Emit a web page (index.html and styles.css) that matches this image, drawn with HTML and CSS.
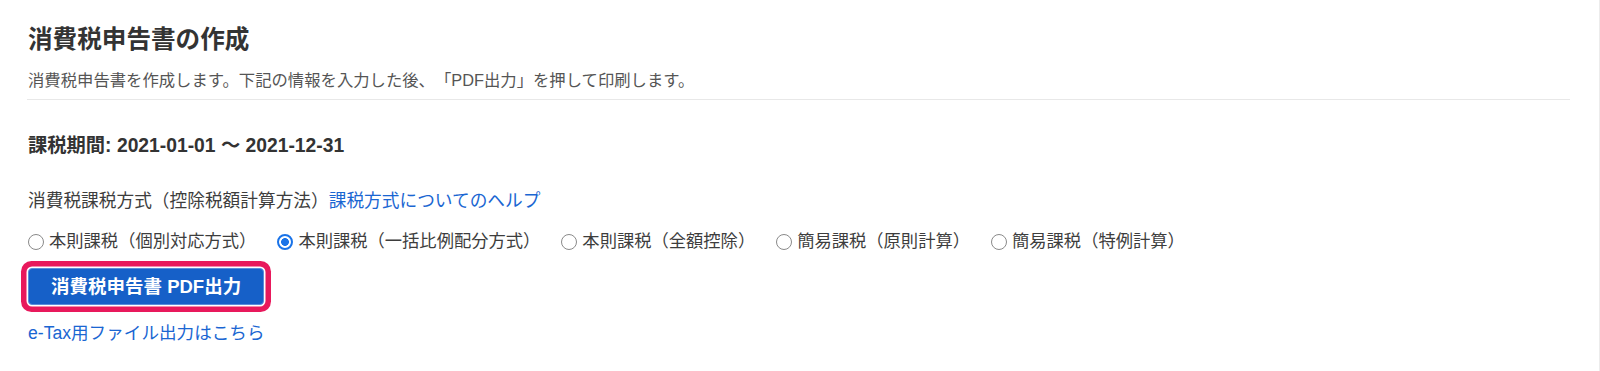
FILE: index.html
```html
<!DOCTYPE html>
<html lang="ja">
<head>
<meta charset="utf-8">
<title>消費税申告書の作成</title>
<link rel="stylesheet" href="styles.css">
</head>
<body>
<div class="page">
  <h1 class="title">消費税申告書の作成</h1>
  <p class="desc">消費税申告書を作成します。下記の情報を入力した後、「PDF出力」を押して印刷します。</p>
  <hr class="rule">
  <div class="period">課税期間: 2021-01-01 〜 2021-12-31</div>
  <div class="method-label">消費税課税方式（控除税額計算方法）<a class="link" href="#">課税方式についてのヘルプ</a></div>
  <div class="radios">
    <label class="radio"><input type="radio" name="m"><span>本則課税（個別対応方式）</span></label>
    <label class="radio"><input type="radio" name="m" checked><span>本則課税（一括比例配分方式）</span></label>
    <label class="radio"><input type="radio" name="m"><span>本則課税（全額控除）</span></label>
    <label class="radio"><input type="radio" name="m"><span>簡易課税（原則計算）</span></label>
    <label class="radio"><input type="radio" name="m"><span>簡易課税（特例計算）</span></label>
  </div>
  <div class="actions">
    <button class="btn" type="button">消費税申告書 PDF出力</button>
  </div>
  <a class="link etax" href="#">e-Tax用ファイル出力はこちら</a>
</div>
</body>
</html>
```

FILE: styles.css
```css
html, body {
  margin: 0;
  padding: 0;
  background: #fff;
}
body {
  font-family: "Liberation Sans", "Noto Sans CJK JP", sans-serif;
  color: #333;
  border-right: 1px solid #ececec;
  min-height: 371px;
  box-sizing: border-box;
  text-spacing-trim: space-all;
}
.page {
  padding: 25px 29px 0 28px;
}
.title {
  margin: 0;
  font-size: 24.6px;
  line-height: 30px;
  font-weight: 700;
  color: #333;
}
.desc {
  margin: 14px 0 0;
  font-size: 16.35px;
  line-height: 22px;
  color: #555;
}
.rule {
  margin: 8px 0 0 -1px;
  border: 0;
  border-top: 1px solid #e8e8e8;
  height: 0;
}
.period {
  margin-top: 34px;
  font-size: 19.3px;
  line-height: 24px;
  font-weight: 700;
  color: #333;
}
.method-label {
  margin-top: 31px;
  font-size: 17.7px;
  line-height: 24px;
  color: #3d3d3d;
}
.link {
  color: #1a66d2;
  text-decoration: none;
}
.radios {
  margin-top: 16px;
  display: flex;
  align-items: center;
  font-size: 17.3px;
  line-height: 24px;
  color: #3d3d3d;
}
.radio {
  display: flex;
  align-items: center;
  margin-right: 21px;
}
.radio input {
  appearance: none;
  -webkit-appearance: none;
  width: 16px;
  height: 16px;
  margin: 1px 5px 0 0;
  border: 1px solid #8a8a8a;
  border-radius: 50%;
  background: #fff;
  box-sizing: border-box;
  flex: none;
}
.radio input:checked {
  border: 2px solid #1a73e8;
  background: radial-gradient(circle, #1a73e8 0 3.6px, #fff 4.2px);
}
.actions {
  margin-top: 15px;
  display: flex;
}
.btn {
  height: 37px;
  padding: 0 22px;
  border: 1px solid #5b8edb;
  background: #1660c8;
  color: #fff;
  font-family: "Liberation Sans", "Noto Sans CJK JP", sans-serif;
  font-size: 18.5px;
  font-weight: 700;
  line-height: 35px;
  box-shadow: 0 0 0 1.5px #fff, 0 0 0 7px #e8195c;
  border-radius: 4px;
  text-spacing-trim: space-all;
}
.etax {
  display: block;
  margin-top: 16px;
  font-size: 17.6px;
  line-height: 24px;
}
```
